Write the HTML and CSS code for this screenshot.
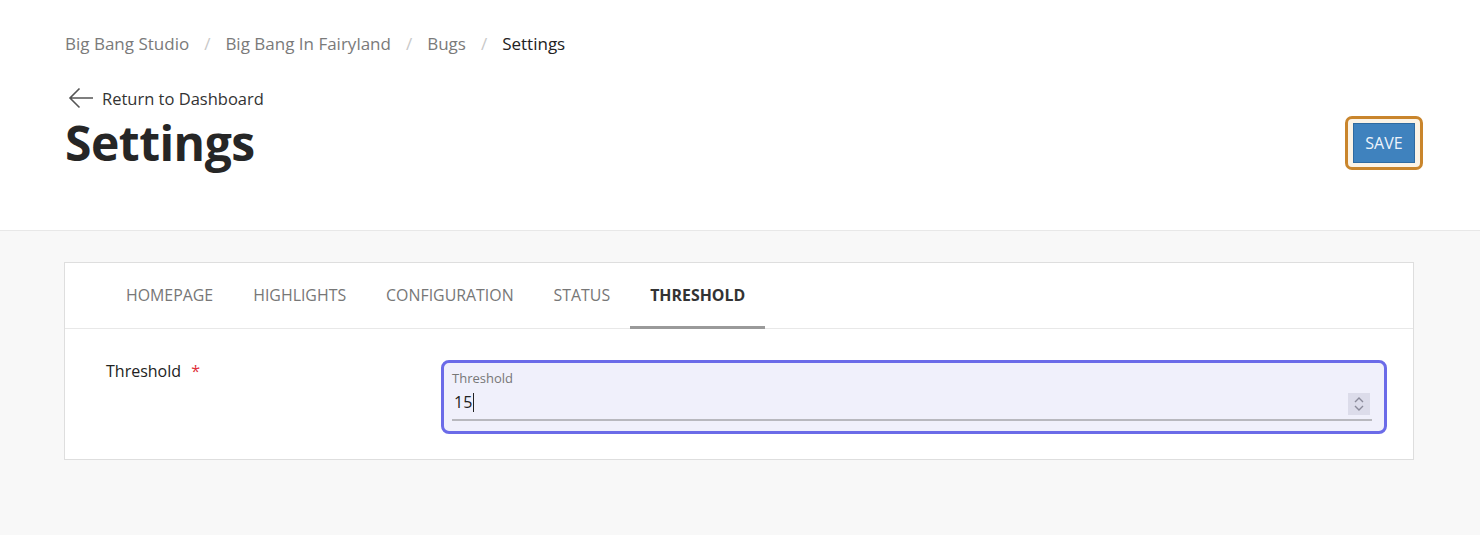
FILE: index.html
```html
<!DOCTYPE html>
<html lang="en">
<head>
    <meta charset="UTF-8">
    <title>Settings</title>
    <link rel="stylesheet" href="styles.css">
</head>
<body>

    <!-- Page header -->
    <header class="page-header">
        <nav class="breadcrumb">
            <a href="#">Big Bang Studio</a>
            <span class="sep">/</span>
            <a href="#">Big Bang In Fairyland</a>
            <span class="sep">/</span>
            <a href="#">Bugs</a>
            <span class="sep">/</span>
            <span class="current">Settings</span>
        </nav>

        <div class="title-row">
            <div>
                <a href="#" class="back-link">
                    <svg width="26" height="22" viewBox="0 0 26 22" fill="none" stroke="#555" stroke-width="1.6">
                        <path d="M25 11H2M11.5 1.5L2 11l9.5 9.5"/>
                    </svg>
                    Return to Dashboard
                </a>
                <h1>Settings</h1>
            </div>
            <div class="save-ring">
                <button class="save-btn">SAVE</button>
            </div>
        </div>
    </header>

    <!-- Main content -->
    <main class="content">
        <div class="card">
            <ul class="tabs">
                <li>HOMEPAGE</li>
                <li>HIGHLIGHTS</li>
                <li>CONFIGURATION</li>
                <li>STATUS</li>
                <li class="active">THRESHOLD</li>
            </ul>

            <div class="form-row">
                <label class="field-label">Threshold <span class="req">*</span></label>
                <div class="field">
                    <span class="field-caption">Threshold</span>
                    <div class="field-input">
                        <span class="value">15<span class="caret"></span></span>
                        <span class="spinner">
                            <svg width="12" height="16" viewBox="0 0 12 16" fill="none" stroke="#8a8a9a" stroke-width="1.4">
                                <path d="M2 6l4-4 4 4M2 10l4 4 4-4"/>
                            </svg>
                        </span>
                    </div>
                </div>
            </div>
        </div>
    </main>

</body>
</html>
```

FILE: styles.css
```css
body {
    margin: 0;
    font-family: 'Open Sans', 'Noto Sans', sans-serif;
    background-color: #f8f8f8;
    color: #333;
}

a {
    text-decoration: none;
    color: inherit;
}

/* Header */
.page-header {
    background: #ffffff;
    border-bottom: 1px solid #e8e8e8;
    padding: 29px 57px 0 65px;
    height: 201px;
}

.breadcrumb {
    font-size: 17px;
    color: #7a7a7a;
    display: flex;
    align-items: center;
    height: 28px;
}

.breadcrumb .sep {
    color: #c8c8c8;
    margin: 0 15px;
}

.breadcrumb .current {
    color: #222;
}

.title-row {
    display: flex;
    justify-content: space-between;
    align-items: flex-start;
    margin-top: 26px;
}

.back-link {
    display: flex;
    align-items: center;
    gap: 8px;
    font-size: 16.5px;
    color: #333;
    margin-left: 3px;
    height: 30px;
}

h1 {
    margin: 2px 0 0;
    font-size: 48px;
    font-weight: 700;
    color: #262626;
    line-height: 56px;
    letter-spacing: -0.5px;
}

.save-ring {
    margin-top: 33px;
    border: 3px solid #c9852c;
    border-radius: 7px;
    padding: 4px 5px;
    background: #fbf3e6;
}

.save-btn {
    display: block;
    background: #3f82be;
    color: #eef4fb;
    border: 1px solid #2f6aa0;
    font-family: inherit;
    font-size: 16px;
    padding: 0;
    height: 40px;
    width: 62px;
}

/* Content */
.content {
    padding: 31px 66px 0 64px;
}

.card {
    background: #ffffff;
    border: 1px solid #dedede;
    height: 196px;
}

.tabs {
    list-style: none;
    margin: 0;
    padding: 0 0 0 41px;
    display: flex;
    border-bottom: 1px solid #e8e8e8;
    height: 65px;
}

.tabs li {
    padding: 0 20px;
    font-size: 15.9px;
    color: #777;
    display: flex;
    align-items: center;
    border-bottom: 3px solid transparent;
    margin-bottom: -1px;
    padding-top: 1px;
}

.tabs li.active {
    color: #333;
    font-weight: 700;
    border-bottom-color: #9a9a9a;
}

.form-row {
    display: flex;
    padding: 31px 26px 0 41px;
}

.field-label {
    width: 335px;
    font-size: 16px;
    color: #222;
}

.req {
    color: #e0303a;
    margin-left: 6px;
}

.field {
    flex: 1;
    border: 3px solid #6b6be8;
    border-radius: 8px;
    background: #f0f0fb;
    padding: 6px 12px 10px 8px;
}

.field-caption {
    display: block;
    font-size: 13px;
    color: #777;
    line-height: 18px;
}

.field-input {
    display: flex;
    align-items: flex-end;
    justify-content: space-between;
    border-bottom: 2px solid #b8b8be;
    height: 32px;
}

.value {
    font-size: 16px;
    color: #222;
    display: flex;
    align-items: center;
    padding-left: 2px;
    margin-bottom: 6px;
}

.caret {
    display: inline-block;
    width: 1px;
    height: 19px;
    background: #222;
    margin-left: 1px;
}

.spinner {
    width: 22px;
    height: 22px;
    background: #dcdcea;
    display: flex;
    align-items: center;
    justify-content: center;
    margin-bottom: 4px;
    margin-right: 2px;
}
```
